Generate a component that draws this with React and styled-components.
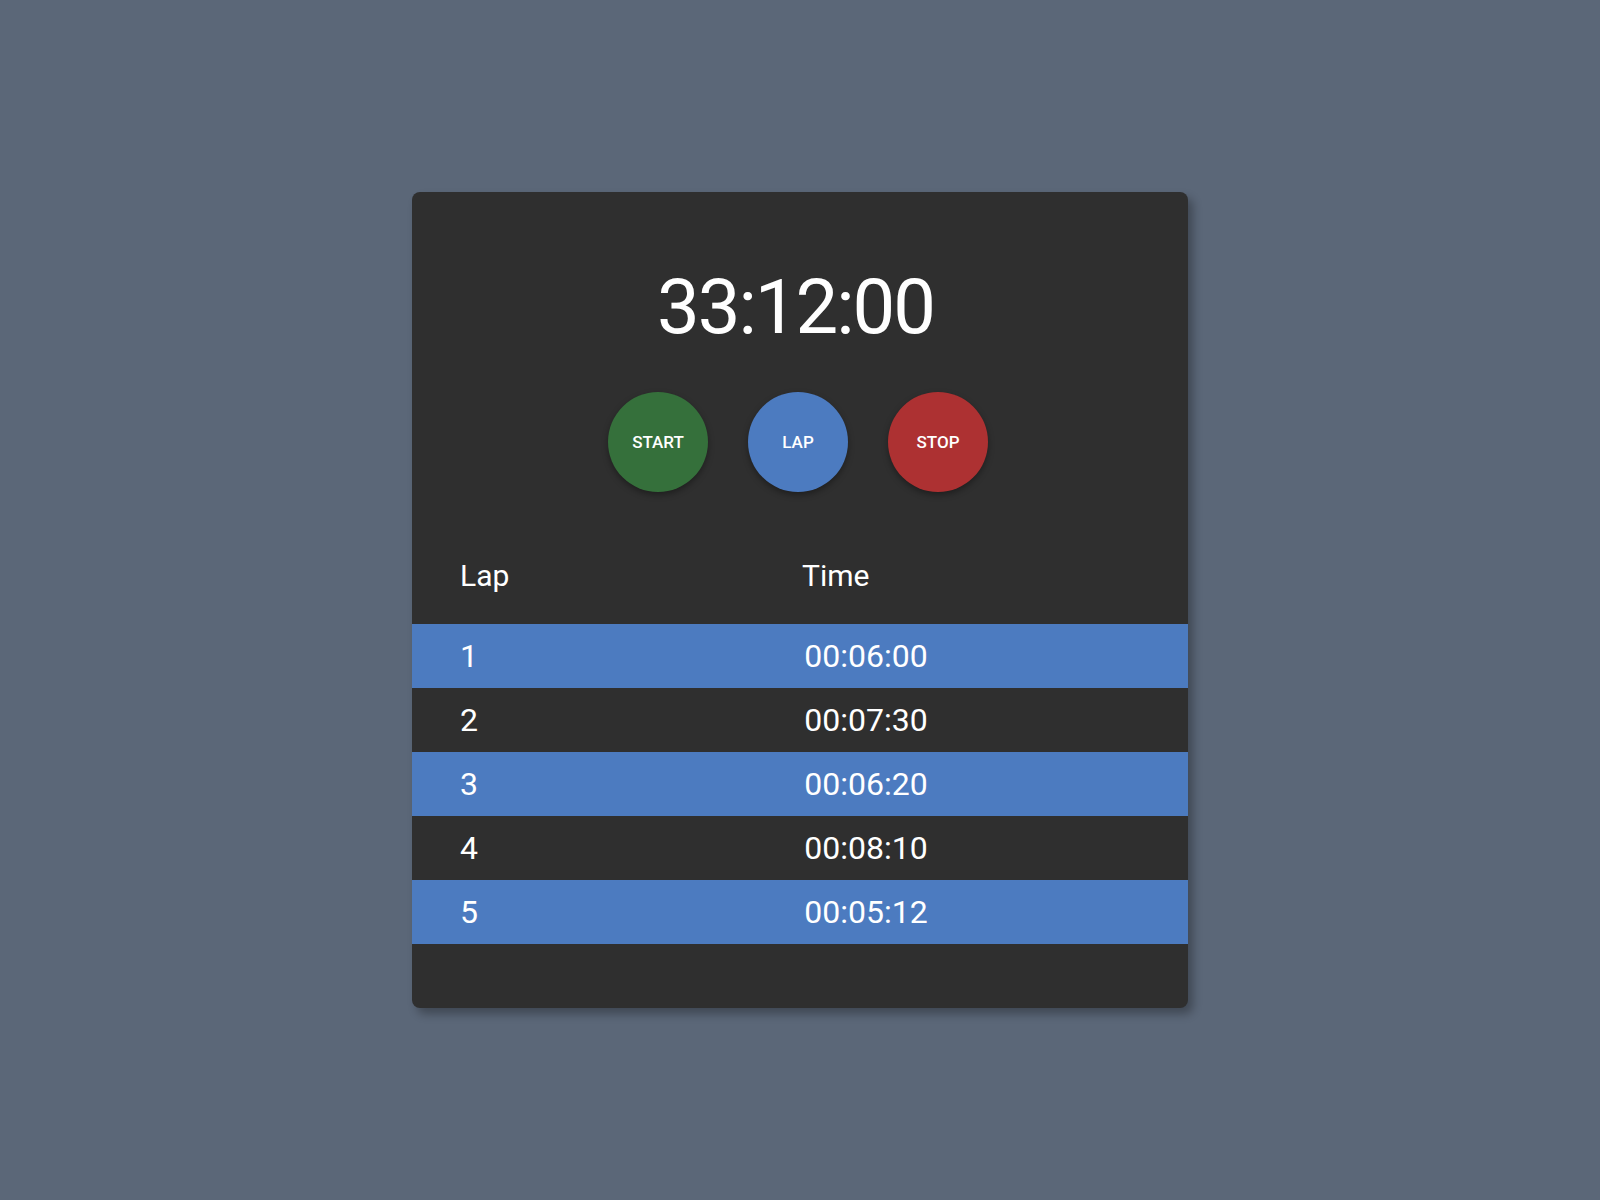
import React from 'react';
import styled, { createGlobalStyle } from 'styled-components';

const GlobalStyle = createGlobalStyle`
  html, body {
    margin: 0;
    padding: 0;
    background: #5b6778;
  }
  body {
    font-family: Roboto, "Liberation Sans", sans-serif;
    color: #fff;
  }
`;

const Page = styled.div`
  min-height: 1200px;
  display: flex;
  align-items: center;
  justify-content: center;
`;

const Card = styled.div`
  width: 776px;
  height: 816px;
  box-sizing: border-box;
  padding-top: 77px;
  background: #2f2f2f;
  border-radius: 8px;
  box-shadow: 5px 6px 10px rgba(0, 0, 0, 0.3);
  display: flex;
  flex-direction: column;
  overflow: hidden;
`;

const Timer = styled.div`
  font-size: 76px;
  line-height: 76px;
  letter-spacing: -2px;
  text-align: center;
  font-weight: 400;
  padding-right: 9px;
`;

const Controls = styled.div`
  margin-top: 47px;
  display: flex;
  justify-content: center;
  gap: 40px;
  padding-right: 4px;
`;

const RoundButton = styled.button`
  width: 100px;
  height: 100px;
  border-radius: 50%;
  border: none;
  background: ${(p) => p.$color};
  color: #fff;
  font-family: Roboto, "Liberation Sans", sans-serif;
  font-size: 17px;
  font-weight: 500;
  box-shadow: 0 3px 6px rgba(0, 0, 0, 0.35);
  cursor: pointer;
  padding: 0;
`;

const LapTable = styled.div`
  margin-top: 68px;
  display: flex;
  flex-direction: column;
`;

const Row = styled.div`
  display: grid;
  grid-template-columns: 342px 128px;
  padding-left: 48px;
  align-items: center;
  height: 64px;
  background: ${(p) => (p.$striped ? '#4c7bc0' : 'transparent')};
  font-size: 32px;
`;

const HeadRow = styled(Row)`
  height: auto;
  line-height: 32px;
  margin-bottom: 32px;
  font-size: 30px;
`;

const LapCell = styled.div`
  text-align: left;
`;

const TimeCell = styled.div`
  text-align: ${(p) => (p.$head ? 'left' : 'center')};
  white-space: nowrap;
`;

const laps = [
  { n: 1, t: '00:06:00' },
  { n: 2, t: '00:07:30' },
  { n: 3, t: '00:06:20' },
  { n: 4, t: '00:08:10' },
  { n: 5, t: '00:05:12' },
];

export default function App() {
  return (
    <>
      <GlobalStyle />
      <Page>
        <Card>
          <Timer>33:12:00</Timer>
          <Controls>
            <RoundButton $color="#35703b">START</RoundButton>
            <RoundButton $color="#4c7bc0">LAP</RoundButton>
            <RoundButton $color="#ad3132">STOP</RoundButton>
          </Controls>
          <LapTable>
            <HeadRow>
              <LapCell>Lap</LapCell>
              <TimeCell $head>Time</TimeCell>
            </HeadRow>
            {laps.map((lap, i) => (
              <Row key={lap.n} $striped={i % 2 === 0}>
                <LapCell>{lap.n}</LapCell>
                <TimeCell>{lap.t}</TimeCell>
              </Row>
            ))}
          </LapTable>
        </Card>
      </Page>
    </>
  );
}
